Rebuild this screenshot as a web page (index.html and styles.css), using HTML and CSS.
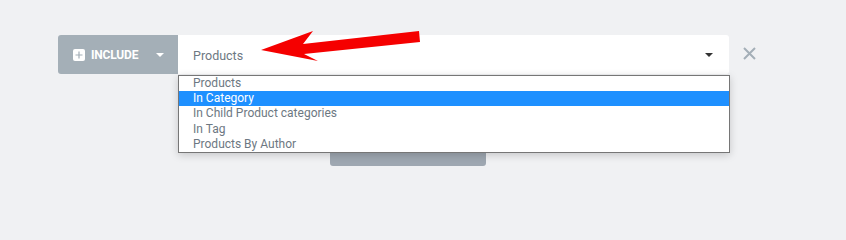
FILE: index.html
```html
<!DOCTYPE html>
<html lang="en">
<head>
<meta charset="utf-8">
<title>Condition</title>
<link rel="stylesheet" href="styles.css">
</head>
<body>
<div class="page">
  <div class="row">
    <div class="include">
      <span class="plus">
        <svg width="12" height="12" viewBox="0 0 12 12"><rect x="0" y="0" width="12" height="12" rx="2" fill="#fff"/><path d="M6 2.5v7M2.5 6h7" stroke="#a4afb7" stroke-width="1.2"/></svg>
      </span>
      <span class="inc-label">Include</span>
      <span class="caret"></span>
    </div>
    <div class="select">
      <span class="sel-text">Products</span>
      <span class="sel-arrow"></span>
      <ul class="options">
        <li>Products</li>
        <li class="active">In Category</li>
        <li>In Child Product categories</li>
        <li>In Tag</li>
        <li>Products By Author</li>
      </ul>
    </div>
    <div class="remove">
      <svg width="13" height="13" viewBox="0 0 13 13"><path d="M1 1L12 12M12 1L1 12" stroke="#a4afb7" stroke-width="2"/></svg>
    </div>
  </div>
  <div class="add-btn"></div>
  <svg class="annot" width="846" height="223" viewBox="0 0 846 223">
    <polygon points="261,50 313,31 303,44 419,31 420,42 304,54 318,61" fill="#f50000"/>
  </svg>
</div>
</body>
</html>
```
FILE: styles.css
```css
html, body {
  margin: 0;
  padding: 0;
  height: 223px;
  overflow: hidden;
}
html {
  background: #f0f1f3;
}
body {
  background: #f0f1f3;
  font-family: Roboto, "Liberation Sans", sans-serif;
  width: 846px;
}
.page {
  position: relative;
  padding-top: 35px;
  height: 188px;
}
.row {
  display: flex;
  align-items: stretch;
  padding-left: 58px;
  height: 39px;
  position: relative;
  z-index: 2;
}
.include {
  width: 120px;
  background: #a4afb7;
  border-radius: 3px 0 0 3px;
  display: flex;
  align-items: center;
  padding-left: 15px;
  box-sizing: border-box;
  color: #fff;
}
.plus {
  display: flex;
  width: 12px;
  height: 12px;
  margin-top: 1px;
}
.inc-label {
  text-transform: uppercase;
  font-weight: 700;
  font-size: 12px;
  margin-left: 6px;
  letter-spacing: -0.2px;
}
.caret {
  margin-left: 18px;
  width: 0;
  height: 0;
  border-left: 4px solid transparent;
  border-right: 4px solid transparent;
  border-top: 4px solid #fff;
  margin-top: 1px;
}
.select {
  position: relative;
  width: 551px;
  background: #fff;
  display: flex;
  align-items: center;
  padding: 0 16px 0 15px;
  box-sizing: border-box;
  border-radius: 0 3px 3px 0;
}
.sel-text {
  flex: 1;
  font-size: 12.5px;
  color: #6d7882;
  margin-top: 1px;
}
.sel-arrow {
  width: 0;
  height: 0;
  border-left: 4px solid transparent;
  border-right: 4px solid transparent;
  border-top: 4px solid #333;
  margin-top: 1px;
}
.options {
  position: absolute;
  left: 0;
  top: 40px;
  width: 552px;
  box-sizing: border-box;
  margin: 0;
  padding: 0;
  list-style: none;
  background: #fff;
  border: 1px solid #767676;
  box-shadow: 0 2px 8px rgba(0, 0, 0, 0.18);
}
.options li {
  font-size: 12px;
  line-height: 15.2px;
  height: 15.2px;
  padding-left: 14px;
  color: #6d7882;
}
.options li.active {
  background: #1e90ff;
  color: #fff;
}
.remove {
  display: flex;
  align-items: center;
  padding-left: 14px;
  padding-bottom: 2px;
}
.add-btn {
  margin-left: 330px;
  margin-top: 55px;
  width: 156px;
  height: 37px;
  background: #9ea7b1;
  border-radius: 3px;
  position: relative;
  z-index: 1;
}
.annot {
  position: absolute;
  left: 0;
  top: 0;
  z-index: 3;
  pointer-events: none;
}
```
